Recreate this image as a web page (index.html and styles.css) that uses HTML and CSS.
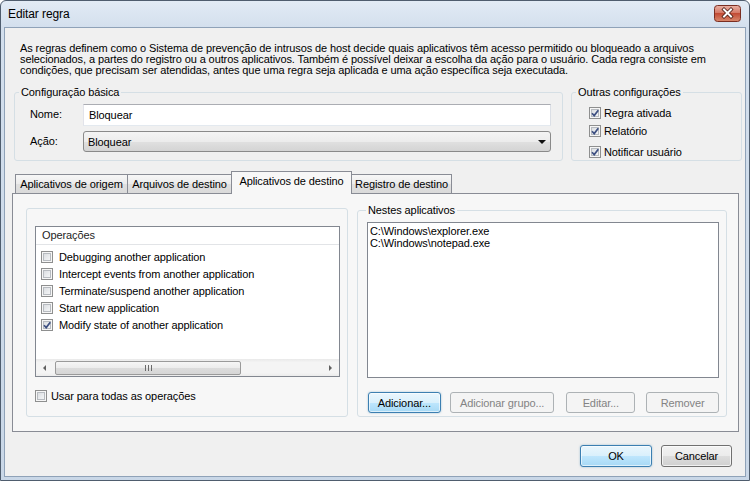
FILE: index.html
```html
<!DOCTYPE html>
<html lang="pt">
<head>
<meta charset="utf-8">
<title>Editar regra</title>
<link rel="stylesheet" href="styles.css">
</head>
<body>
<div class="window">
  <div class="titlebar">
    <span class="title">Editar regra</span>
    <span class="close-btn">
      <svg width="27" height="17" viewBox="0 0 27 17">
        <defs>
          <linearGradient id="cg" x1="0" y1="0" x2="0" y2="1">
            <stop offset="0" stop-color="#eab2a5"/>
            <stop offset="0.45" stop-color="#d57a68"/>
            <stop offset="0.5" stop-color="#c24b35"/>
            <stop offset="1" stop-color="#d98a6e"/>
          </linearGradient>
        </defs>
        <rect x="0.5" y="0.5" width="26" height="16" rx="3" ry="3" fill="url(#cg)" stroke="#7a2e22"/>
        <path d="M10 4.5 L17 11.5 M17 4.5 L10 11.5" stroke="#4b1a12" stroke-width="3.6" stroke-linecap="square"/>
        <path d="M10 4.5 L17 11.5 M17 4.5 L10 11.5" stroke="#ffffff" stroke-width="2" stroke-linecap="square"/>
      </svg>
    </span>
  </div>
  <div class="client">
    <p class="desc">As regras definem como o Sistema de prevenção de intrusos de host decide quais aplicativos têm acesso permitido ou bloqueado a arquivos<br>selecionados, a partes do registro ou a outros aplicativos. Também é possível deixar a escolha da ação para o usuário. Cada regra consiste em<br>condições, que precisam ser atendidas, antes que uma regra seja aplicada e uma ação específica seja executada.</p>

    <div class="top-row">
      <section class="gbox group-basic">
        <div class="gcap">Configuração básica</div>
        <div class="basic-body">
          <div class="form-row">
            <span class="form-label">Nome:</span>
            <div class="textbox">Bloquear</div>
          </div>
          <div class="form-row row-action">
            <span class="form-label">Ação:</span>
            <div class="combo"><span>Bloquear</span><span class="combo-arrow"></span></div>
          </div>
        </div>
      </section>
      <section class="gbox group-other">
        <div class="gcap">Outras configurações</div>
        <div class="other-body">
          <div class="check-row opt"><span class="cb checked"><svg viewBox="0 0 10 10"><path d="M2 5.2 L4.2 7.6 L8.3 2.2"/></svg></span><span>Regra ativada</span></div>
          <div class="check-row opt"><span class="cb checked"><svg viewBox="0 0 10 10"><path d="M2 5.2 L4.2 7.6 L8.3 2.2"/></svg></span><span>Relatório</span></div>
          <div class="check-row opt opt-last"><span class="cb checked"><svg viewBox="0 0 10 10"><path d="M2 5.2 L4.2 7.6 L8.3 2.2"/></svg></span><span>Notificar usuário</span></div>
        </div>
      </section>
    </div>

    <div class="tabs">
      <div class="tab t1">Aplicativos de origem</div>
      <div class="tab t2">Arquivos de destino</div>
      <div class="tab t3 active">Aplicativos de destino</div>
      <div class="tab t4">Registro de destino</div>
    </div>

    <div class="tab-panel">
      <div class="ops-group">
        <div class="listview">
          <div class="lv-header">Operações</div>
          <div class="lv-items">
            <div class="lv-item"><span class="cb"></span><span>Debugging another application</span></div>
            <div class="lv-item"><span class="cb"></span><span>Intercept events from another application</span></div>
            <div class="lv-item"><span class="cb"></span><span>Terminate/suspend another application</span></div>
            <div class="lv-item"><span class="cb"></span><span>Start new application</span></div>
            <div class="lv-item"><span class="cb checked"><svg viewBox="0 0 10 10"><path d="M2 5.2 L4.2 7.6 L8.3 2.2"/></svg></span><span>Modify state of another application</span></div>
          </div>
          <div class="hscroll">
            <div class="sb-arrow"><span class="tri-left"></span></div>
            <div class="sb-thumb"><span class="grip"></span><span class="grip"></span><span class="grip"></span></div>
            <div class="sb-arrow sb-right"><span class="tri-right"></span></div>
          </div>
        </div>
        <div class="check-row use-all"><span class="cb"></span><span>Usar para todas as operações</span></div>
      </div>

      <section class="gbox apps-group">
        <div class="gcap apps-cap">Nestes aplicativos</div>
        <div class="apps-body">
          <div class="listbox">
            <div>C:\Windows\explorer.exe</div>
            <div>C:\Windows\notepad.exe</div>
          </div>
          <div class="btn-row">
            <button class="btn focused b-add">Adicionar...</button>
            <button class="btn disabled b-group">Adicionar grupo...</button>
            <button class="btn disabled b-edit">Editar...</button>
            <button class="btn disabled b-remove">Remover</button>
          </div>
        </div>
      </section>
    </div>

    <div class="dialog-buttons">
      <button class="btn focused b-ok">OK</button>
      <button class="btn b-cancel">Cancelar</button>
    </div>
  </div>
</div>
</body>
</html>
```

FILE: styles.css
```css
* { box-sizing: border-box; }
html, body { margin: 0; padding: 0; }
body {
  width: 750px;
  height: 481px;
  overflow: hidden;
  background: #ffffff;
  font-family: "Liberation Sans", Arial, sans-serif;
  font-size: 11px;
  letter-spacing: -0.1px;
  color: #000;
}

.window {
  width: 750px;
  height: 481px;
  border: 1px solid #4f5d6e;
  border-radius: 6px 6px 0 0;
  background: linear-gradient(#e2ebf5 0px, #d3dfed 27px, #c9d7e7 100%);
  padding: 0 3px 3px;
  display: flex;
  flex-direction: column;
}

.titlebar {
  height: 26px;
  display: flex;
  align-items: center;
  justify-content: space-between;
  padding: 0 4px 1px 4px;
}
.title { font-size: 12px; color: #000; }
.close-btn {
  width: 27px;
  height: 17px;
  align-self: flex-start;
  margin-top: 4px;
  margin-right: 1px;
}
.close-btn svg { display: block; }

.client {
  flex: 1;
  background: #f0f0f0;
  border: 1px solid #8fa2b8;
  display: flex;
  flex-direction: column;
}

.desc {
  margin: 15px 0 0 15px;
  line-height: 11px;
  white-space: nowrap;
}

.top-row {
  display: flex;
  align-items: stretch;
  margin: 16px 0 0 9px;
}

/* group boxes */
.gbox {
  border: 1px solid #d5dfe5;
  border-radius: 3px;
}
.gcap {
  width: max-content;
  margin: -8px 0 0 4px;
  padding: 0 2px;
  line-height: 14px;
  background: #f0f0f0;
}

.group-basic { width: 549px; }
.basic-body { padding: 5px 11px 8px 15px; }
.form-row { display: flex; align-items: center; }
.row-action { margin-top: 5px; }
.form-label { width: 53px; margin-top: -2px; }
.textbox {
  width: 468px;
  height: 22px;
  background: #fff;
  border: 1px solid;
  border-color: #abadb3 #dbdfe6 #e3e9ef #e2e3ea;
  padding-left: 5px;
  line-height: 20px;
}
.combo {
  width: 468px;
  height: 21px;
  border: 1px solid #8a8a8a;
  border-radius: 3px;
  background: linear-gradient(#f4f4f4 0%, #ececec 50%, #e0e0e0 51%, #d4d4d4 100%);
  display: flex;
  align-items: center;
  justify-content: space-between;
  padding: 0 4px 0 4px;
}
.combo-arrow {
  width: 0;
  height: 0;
  border-left: 4px solid transparent;
  border-right: 4px solid transparent;
  border-top: 4px solid #111;
  margin-top: 1px;
}

.group-other { width: 171px; margin-left: 8px; }
.other-body { padding: 7px 0 0 17px; }
.check-row { display: flex; align-items: center; height: 14px; }
.opt { margin-bottom: 4px; }
.opt .cb { margin-right: 3px; }
.opt-last { margin-top: 7px; margin-bottom: 0; }

.cb {
  width: 12px;
  height: 12px;
  flex: none;
  border: 1px solid #8e8f8f;
  background: linear-gradient(135deg, #d3d6da 0%, #eceef0 60%, #fafafa 100%);
  box-shadow: inset 0 0 0 1px #f6f6f6, inset 0 0 0 2px #b7bbc0;
  display: inline-block;
}
.cb svg { display: block; width: 10px; height: 10px; }
.cb svg path { fill: none; stroke: #3e5082; stroke-width: 1.7; }

/* tabs */
.tabs {
  display: flex;
  align-items: flex-end;
  height: 22px;
  margin: 10px 0 0 7px;
  padding-left: 3px;
}
.tab {
  height: 19px;
  border: 1px solid #898c95;
  border-bottom: none;
  background: linear-gradient(#f7f7f7 0%, #ebebeb 50%, #e0e0e0 51%, #dadada 100%);
  text-align: center;
  line-height: 18px;
  white-space: nowrap;
}
.t1 { width: 113px; }
.t2 { width: 105px; margin-left: -1px; }
.t3 { width: 121px; margin-left: -1px; }
.t4 { width: 101px; margin-left: -1px; }
.tab.active {
  height: 23px;
  margin-bottom: -1px;
  background: #f7f7f7;
  line-height: 19px;
  position: relative;
  z-index: 1;
}

.tab-panel {
  height: 239px;
  margin: 0 6px 0 7px;
  border: 1px solid #898c95;
  background: #f7f7f7;
  display: flex;
  padding: 14px 11px 14px 13px;
}

.ops-group {
  width: 322px;
  border: 1px solid #d5dfe5;
  border-radius: 3px;
  padding: 17px 7px 0 8px;
  display: flex;
  flex-direction: column;
}
.listview {
  height: 151px;
  border: 1px solid #828790;
  background: #fff;
  display: flex;
  flex-direction: column;
}
.lv-header {
  height: 18px;
  line-height: 17px;
  padding-left: 6px;
  border-bottom: 1px solid #e2e4e7;
  color: #1e1e1e;
}
.lv-items { padding-top: 3px; }
.lv-item {
  height: 17px;
  display: flex;
  align-items: center;
  padding-left: 5px;
}
.lv-item .cb { margin-right: 6px; }

.hscroll {
  margin-top: auto;
  height: 17px;
  display: flex;
  align-items: center;
  background: linear-gradient(#e9e9e9 0%, #f4f4f4 20%, #f4f4f4 80%, #ececec 100%);
}
.sb-arrow {
  width: 17px;
  height: 17px;
  display: flex;
  align-items: center;
  justify-content: center;
}
.sb-right { margin-left: auto; }
.tri-left {
  width: 0; height: 0;
  border-top: 3px solid transparent;
  border-bottom: 3px solid transparent;
  border-right: 3px solid #606060;
}
.tri-right {
  width: 0; height: 0;
  border-top: 3px solid transparent;
  border-bottom: 3px solid transparent;
  border-left: 3px solid #606060;
}
.sb-thumb {
  width: 186px;
  height: 14px;
  margin-left: 2px;
  border: 1px solid #9a9a9a;
  border-radius: 2px;
  background: linear-gradient(#f6f6f6 0%, #ececec 50%, #dcdcdc 51%, #d6d6d6 100%);
  display: flex;
  align-items: center;
  justify-content: center;
  gap: 2px;
}
.grip { width: 1px; height: 6px; background: #6a6a6a; }

.use-all { margin-top: 12px; }
.use-all .cb { margin-right: 4px; }

.apps-group { width: 370px; margin: 2px 0 0 9px; }
.apps-cap { margin-left: 8px; background: #f7f7f7; }
.apps-body { padding: 5px 7px 3px 9px; }
.listbox {
  height: 156px;
  border: 1px solid #828790;
  background: #fff;
  padding: 2px 2px;
  line-height: 12px;
}
.btn-row { display: flex; margin-top: 14px; }

.btn {
  height: 21px;
  padding: 0;
  margin: 0;
  font: inherit;
  letter-spacing: inherit;
  color: #000;
  text-align: center;
  border: 1px solid #707070;
  border-radius: 3px;
  background: linear-gradient(#f2f2f2 0%, #ebebeb 50%, #dddddd 51%, #cfcfcf 100%);
  box-shadow: inset 0 0 0 1px rgba(255,255,255,0.7);
}
.btn.focused {
  border-color: #3c7fb1;
  background: linear-gradient(#eaf6fd 0%, #d9f0fc 50%, #bee6fd 51%, #a7d9f5 100%);
  box-shadow: inset 0 0 0 1px rgba(255,255,255,0.6), 0 0 2px rgba(60,127,177,0.5);
}
.btn.disabled {
  border-color: #adb2b5;
  background: #f4f4f4;
  color: #838383;
  box-shadow: none;
}
.b-add { width: 73px; margin-left: 1px; }
.b-group { width: 105px; margin-left: 9px; }
.b-edit { width: 69px; margin-left: 12px; }
.b-remove { width: 73px; margin-left: 11px; }

.dialog-buttons {
  display: flex;
  justify-content: flex-end;
  gap: 9px;
  margin-top: 13px;
  padding-right: 13px;
}
.b-ok { width: 72px; height: 22px; }
.b-cancel { width: 71px; height: 22px; }
```
